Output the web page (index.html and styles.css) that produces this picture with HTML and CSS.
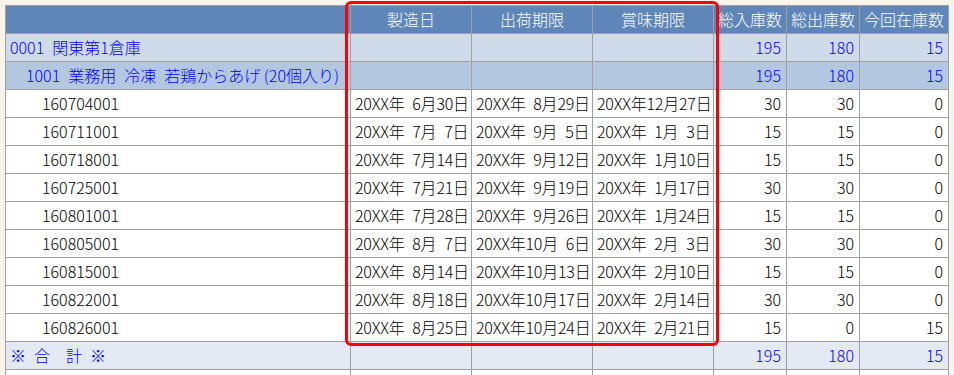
FILE: index.html
```html
<!DOCTYPE html>
<html lang="ja">
<head>
<meta charset="utf-8">
<title>在庫一覧</title>
<link rel="stylesheet" href="styles.css">
</head>
<body>
<div class="wrap">
  <table class="stock">
    <colgroup>
      <col class="c-name"><col class="c-date"><col class="c-date"><col class="c-date"><col class="c-num"><col class="c-num"><col class="c-num-w">
    </colgroup>
    <thead>
      <tr class="head">
        <th></th><th>製造日</th><th>出荷期限</th><th>賞味期限</th><th>総入庫数</th><th>総出庫数</th><th>今回在庫数</th>
      </tr>
    </thead>
    <tbody>
      <tr class="wh">
        <td class="name">0001&ensp;関東第1倉庫</td><td></td><td></td><td></td><td class="num">195</td><td class="num">180</td><td class="num">15</td>
      </tr>
      <tr class="prod">
        <td class="name ind1">1001&ensp;業務用&ensp;冷凍&ensp;若鶏からあげ (20個入り)</td><td></td><td></td><td></td><td class="num">195</td><td class="num">180</td><td class="num">15</td>
      </tr>
      <tr class="row"><td class="name ind2">160704001</td><td class="date">20XX年&ensp;6月30日</td><td class="date">20XX年&ensp;8月29日</td><td class="date">20XX年12月27日</td><td class="num">30</td><td class="num">30</td><td class="num">0</td></tr>
      <tr class="row"><td class="name ind2">160711001</td><td class="date">20XX年&ensp;7月&ensp;7日</td><td class="date">20XX年&ensp;9月&ensp;5日</td><td class="date">20XX年&ensp;1月&ensp;3日</td><td class="num">15</td><td class="num">15</td><td class="num">0</td></tr>
      <tr class="row"><td class="name ind2">160718001</td><td class="date">20XX年&ensp;7月14日</td><td class="date">20XX年&ensp;9月12日</td><td class="date">20XX年&ensp;1月10日</td><td class="num">15</td><td class="num">15</td><td class="num">0</td></tr>
      <tr class="row"><td class="name ind2">160725001</td><td class="date">20XX年&ensp;7月21日</td><td class="date">20XX年&ensp;9月19日</td><td class="date">20XX年&ensp;1月17日</td><td class="num">30</td><td class="num">30</td><td class="num">0</td></tr>
      <tr class="row"><td class="name ind2">160801001</td><td class="date">20XX年&ensp;7月28日</td><td class="date">20XX年&ensp;9月26日</td><td class="date">20XX年&ensp;1月24日</td><td class="num">15</td><td class="num">15</td><td class="num">0</td></tr>
      <tr class="row"><td class="name ind2">160805001</td><td class="date">20XX年&ensp;8月&ensp;7日</td><td class="date">20XX年10月&ensp;6日</td><td class="date">20XX年&ensp;2月&ensp;3日</td><td class="num">30</td><td class="num">30</td><td class="num">0</td></tr>
      <tr class="row"><td class="name ind2">160815001</td><td class="date">20XX年&ensp;8月14日</td><td class="date">20XX年10月13日</td><td class="date">20XX年&ensp;2月10日</td><td class="num">15</td><td class="num">15</td><td class="num">0</td></tr>
      <tr class="row"><td class="name ind2">160822001</td><td class="date">20XX年&ensp;8月18日</td><td class="date">20XX年10月17日</td><td class="date">20XX年&ensp;2月14日</td><td class="num">30</td><td class="num">30</td><td class="num">0</td></tr>
      <tr class="row"><td class="name ind2">160826001</td><td class="date">20XX年&ensp;8月25日</td><td class="date">20XX年10月24日</td><td class="date">20XX年&ensp;2月21日</td><td class="num">15</td><td class="num">0</td><td class="num">15</td></tr>
      <tr class="total">
        <td class="name">※&ensp;合　計&ensp;※</td><td></td><td></td><td></td><td class="num">195</td><td class="num">180</td><td class="num">15</td>
      </tr>
      <tr class="row"><td></td><td></td><td></td><td></td><td></td><td></td><td></td></tr>
    </tbody>
  </table>
  <div class="highlight" aria-hidden="true"></div>
</div>
</body>
</html>
```
FILE: styles.css
```css
html, body {
  margin: 0;
  padding: 0;
  overflow: hidden;
  background: #f8f4ec;
}
body {
  font-family: "Noto Sans CJK JP", sans-serif;
  font-size: 16px;
  font-weight: 300;
  color: #000;
}
.wrap {
  position: relative;
  padding: 5px;
}
.stock {
  table-layout: fixed;
  width: 944px;
  border-collapse: separate;
  border-spacing: 0;
  border-left: 1px solid #a0a0a0;
  border-top: 1px solid #a0a0a0;
}
.c-name { width: 345px; }
.c-date { width: 121px; }
.c-num { width: 73px; }
.c-num-w { width: 89px; }
.stock th,
.stock td {
  border-right: 1px solid #a0a0a0;
  border-bottom: 1px solid #a0a0a0;
  padding: 0 4px;
  height: 27px;
  line-height: 27px;
  white-space: pre;
  overflow: hidden;
  box-sizing: content-box;
}
.stock th {
  background: #5e86b8;
  color: #fff;
  font-weight: 300;
  text-align: center;
  padding: 0;
}
.wh td { background: #cfdbea; color: #0000ff; }
.prod td { background: #b4c7e0; color: #0000ff; }
.total td { background: #e3eaf4; color: #0000ff; }
.row td { background: #fff; }
.stock td.name { text-align: left; }
.stock td.ind1 { padding-left: 20px; }
.stock td.ind2 { padding-left: 36px; }
.stock td.date { text-align: left; padding-left: 4px; letter-spacing: -0.2px; }
.stock td.num { text-align: right; padding-right: 5px; }
.highlight {
  position: absolute;
  left: 345px;
  top: 1px;
  width: 368px;
  height: 339px;
  border: 3px solid #ff0000;
  border-radius: 6px;
  pointer-events: none;
}
```
